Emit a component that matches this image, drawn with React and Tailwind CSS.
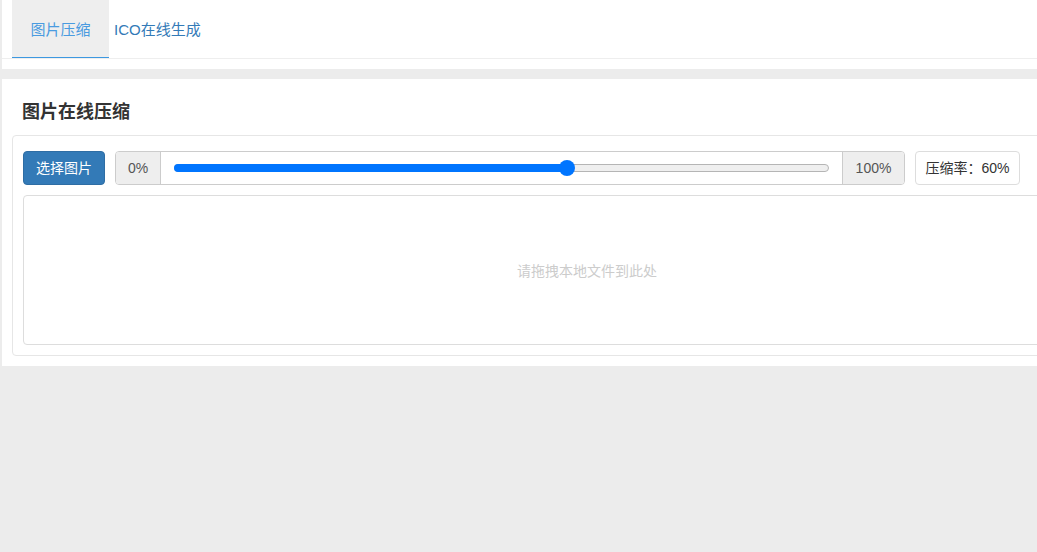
import React from "react";

const FONT = { fontFamily: '"Liberation Sans", "Noto Sans CJK SC", sans-serif' };

const TABS = [
  { id: "compress", label: "图片压缩", active: true },
  { id: "ico", label: "ICO在线生成", active: false },
];

export default function App() {
  const rate = 60;
  return (
    <div className="w-[1037px] h-[552px] overflow-hidden bg-[#ececec]" style={FONT}>
      <div className="w-[1170px] ml-[2px] bg-white pb-[10px]">
        <div className="flex h-[59px] border-b border-[#eeeeee] pl-[10px]">
          {TABS.map((t) =>
            t.active ? (
              <div key={t.id} className="h-[58px] w-[97px] pt-[2px] bg-[#eeeeee] border-b border-[#3d98e0] flex items-center justify-center text-[15px] leading-5 text-[#4a9be0]">
                {t.label}
              </div>
            ) : (
              <div key={t.id} className="h-[58px] pt-[2px] px-[5px] flex items-center text-[15px] leading-5 text-[#337ab7]">
                {t.label}
              </div>
            )
          )}
        </div>
      </div>

      <div className="w-[1170px] ml-[2px] mt-[10px] bg-white px-[10px] pb-[10px]">
        <div className="pt-[21px] pb-[11px] pl-[10px] h-[56px]">
          <h1 className="text-[18px] leading-6 font-bold text-[#333]">图片在线压缩</h1>
        </div>
        <div className="border border-[#e6e6e6] rounded-[4px] px-[10px] pt-[15px] pb-[10px]">
          <div className="flex items-stretch h-[34px] gap-[10px]">
            <button className="w-[82px] rounded-[4px] bg-[#337ab7] border border-[#2e6da4] text-white text-[14px] leading-5">
              选择图片
            </button>
            <div className="w-[790px] flex border border-[#cccccc] rounded-[4px] overflow-hidden text-[14px] text-[#555]">
              <div className="w-[45px] bg-[#eeeeee] border-r border-[#cccccc] flex items-center justify-center">0%</div>
              <div className="flex-1 bg-white px-[13px] flex items-center">
                <div className="relative w-full h-[8px]">
                  <div className="absolute inset-0 rounded-full bg-[#efefef] border border-[#b5b5b5]" />
                  <div className="absolute left-0 top-0 h-[8px] rounded-full bg-[#0075ff]" style={{ width: `${rate}%` }} />
                  <div className="absolute top-1/2 w-[16px] h-[16px] -ml-[8px] -mt-[8px] rounded-full bg-[#0075ff]" style={{ left: `${rate}%` }} />
                </div>
              </div>
              <div className="w-[62px] bg-[#eeeeee] border-l border-[#cccccc] flex items-center justify-center">100%</div>
            </div>
            <div className="w-[105px] border border-[#dddddd] rounded-[4px] flex items-center justify-center text-[14px] text-[#333]">
              压缩率：{rate}%
            </div>
          </div>
          <div className="mt-[10px] h-[150px] pt-[2px] border border-[#dddddd] rounded-[4px] flex items-center justify-center text-[14px] text-[#cccccc]">
            请拖拽本地文件到此处
          </div>
        </div>
      </div>
    </div>
  );
}
